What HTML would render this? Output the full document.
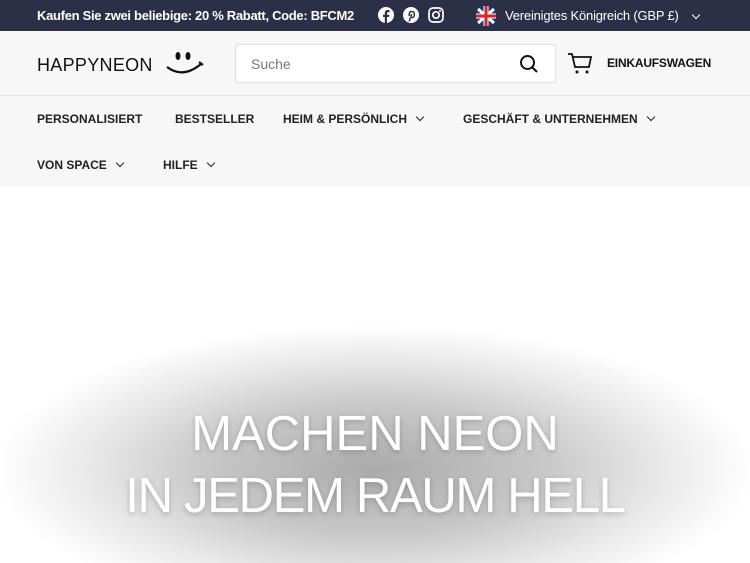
<!DOCTYPE html>
<html><head><meta charset="utf-8"><style>
*{margin:0;padding:0;box-sizing:border-box}
body{width:750px;height:563px;overflow:hidden;font-family:"Liberation Sans",sans-serif;background:#fff;position:relative}
.top{height:31px;background:#2c3046;color:#fff;font-size:13px;font-weight:bold;position:relative}
.top span{position:absolute;top:8px}
.hdr{position:absolute;top:31px;left:0;width:750px;height:65px;background:#f7f7f7;border-bottom:1px solid #e4e4e4}
.nav{position:absolute;top:96px;left:0;width:750px;height:91px;background:#f7f7f7;font-size:12px;font-weight:bold;color:#222}
.nav span{position:absolute}
.chev{display:inline-block;width:6px;height:6px;border-right:1.6px solid #222;border-bottom:1.6px solid #222;transform:rotate(45deg);margin-left:10px;position:relative;top:-3px}
.hero{position:absolute;top:187px;left:0;width:750px;height:376px;background:radial-gradient(ellipse 380px 145px at 375px 283px,#aaa 0%,#c8c8c8 45%,#e8e8e8 75%,#fff 100%)}
.ht{position:absolute;left:0;width:750px;text-align:center;color:#fff;font-size:49px;text-shadow:0 2px 6px rgba(0,0,0,.2)}
</style></head><body>
<div class="top">
<span style="left:37px;letter-spacing:-0.3px">Kaufen Sie zwei beliebige: 20 % Rabatt, Code: BFCM2</span>
<svg style="position:absolute;left:378px;top:7px" width="16" height="16"><circle cx="8" cy="8" r="8" fill="#fff"/><path d="M9 16V10h2l.4-2.3H9V6.4c0-.7.3-1.1 1.2-1.1h1.3V3.2C11 3.1 10.4 3 9.8 3 8 3 6.8 4 6.8 6v1.7H5V10h1.8v6z" fill="#2c3046"/></svg>
<svg style="position:absolute;left:403px;top:7px" width="16" height="16"><circle cx="8" cy="8" r="8" fill="#fff"/><path d="M7.3 10.5l-1 4M6.5 9C5.5 7 6.5 4.5 8.6 4.5c2 0 2.8 1.3 2.8 2.8 0 2-1 3.3-2.3 3.3-.8 0-1.3-.6-1.1-1.4l.6-2.3" stroke="#2c3046" stroke-width="1.5" fill="none"/></svg>
<svg style="position:absolute;left:428px;top:7px" width="16" height="16"><rect x="1" y="1" width="14" height="14" rx="4" stroke="#fff" stroke-width="1.7" fill="none"/><circle cx="8" cy="8" r="3.2" stroke="#fff" stroke-width="1.7" fill="none"/><circle cx="12" cy="4" r="1" fill="#fff"/></svg>
<svg style="position:absolute;left:475px;top:5px" width="22" height="22"><circle cx="11" cy="11" r="10" fill="#1f3a8a"/><path d="M3 4L19 18M19 4L3 18" stroke="#fff" stroke-width="3"/><path d="M11 1v20M1 11h20" stroke="#fff" stroke-width="5"/><path d="M11 1v20M1 11h20" stroke="#d22" stroke-width="3"/></svg>
<span style="left:505px;font-weight:normal;letter-spacing:-0.2px">Vereinigtes Königreich (GBP £)</span>
<span style="left:693px;top:9px"><i class="chev" style="border-color:#fff;margin-left:0"></i></span>
</div>
<div class="hdr">
<div style="position:absolute;left:37px;top:24px;font-size:18px;color:#111;letter-spacing:.3px">HAPPYNEON</div>
<svg style="position:absolute;left:163px;top:18px" width="44" height="28"><ellipse cx="15" cy="7" rx="2.5" ry="4" fill="#111"/><ellipse cx="25" cy="7" rx="2.5" ry="4" fill="#111"/><path d="M4 18Q20 30 38 15M36 13l4 3" stroke="#111" stroke-width="2.2" fill="none"/></svg>
<div style="position:absolute;left:235px;top:13px;width:321px;height:39px;background:#fff;border:1px solid #e0e0e0;border-radius:2px"><span style="position:absolute;left:15px;top:11px;font-size:14px;color:#777">Suche</span>
<svg style="position:absolute;left:283px;top:9px" width="20" height="20"><circle cx="8.5" cy="8.5" r="6.5" stroke="#111" stroke-width="2" fill="none"/><path d="M13 13l5 5" stroke="#111" stroke-width="2"/></svg></div>
<svg style="position:absolute;left:567px;top:20px" width="26" height="24"><path d="M1 3h4l3 13h14l2-10H6" stroke="#111" stroke-width="1.8" fill="none"/><circle cx="10" cy="21" r="1.5" fill="#111"/><circle cx="20" cy="21" r="1.5" fill="#111"/></svg>
<span style="position:absolute;left:607px;top:25px;font-size:12px;font-weight:bold;color:#111;letter-spacing:-0.2px">EINKAUFSWAGEN</span>
</div>
<div class="nav">
<span style="left:37px;top:16px">PERSONALISIERT</span>
<span style="left:175px;top:16px">BESTSELLER</span>
<span style="left:283px;top:16px">HEIM &amp; PERSÖNLICH<i class="chev"></i></span>
<span style="left:463px;top:16px">GESCHÄFT &amp; UNTERNEHMEN<i class="chev"></i></span>
<span style="left:37px;top:62px">VON SPACE<i class="chev"></i></span>
<span style="left:163px;top:62px">HILFE<i class="chev"></i></span>
</div>
<div class="hero">
<div class="ht" style="top:219px">MACHEN NEON</div>
<div class="ht" style="top:281px;letter-spacing:-1.3px">IN JEDEM RAUM HELL</div>
</div>
</body></html>
